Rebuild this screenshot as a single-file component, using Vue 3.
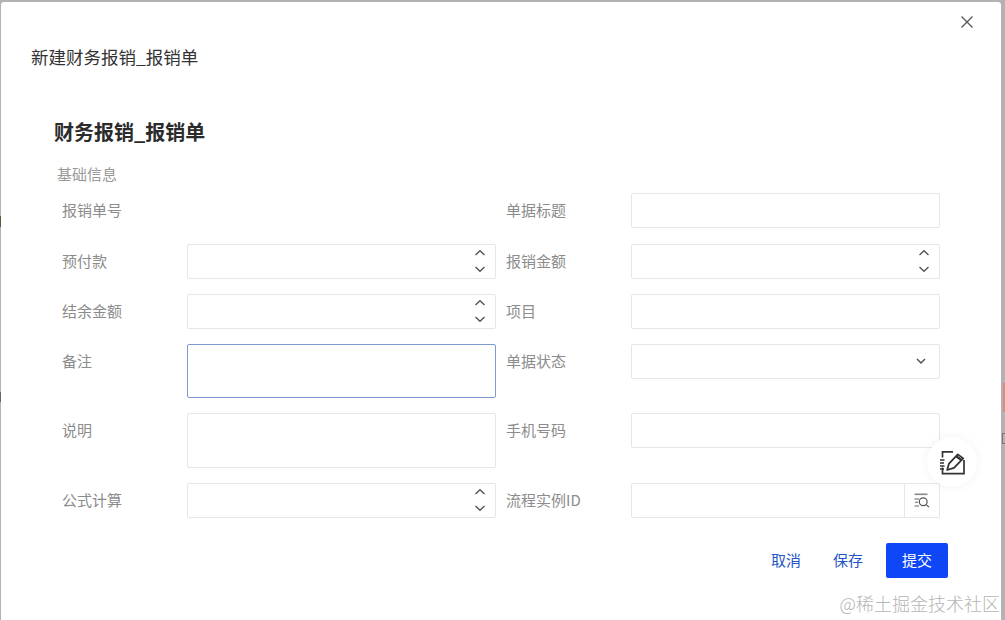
<script setup>
const rows = [
  [{ label: '报销单号', type: 'none' }, { label: '单据标题', type: 'text', short: true }],
  [{ label: '预付款', type: 'number' }, { label: '报销金额', type: 'number' }],
  [{ label: '结余金额', type: 'number' }, { label: '项目', type: 'text' }],
  [{ label: '备注', type: 'focus' }, { label: '单据状态', type: 'select', short: true }],
  [{ label: '说明', type: 'text' }, { label: '手机号码', type: 'text', short: true }],
  [{ label: '公式计算', type: 'number' }, { label: '流程实例ID', type: 'lookup' }],
]
</script>

<template>
  <div class="page">
    <span class="edge-left"></span>
    <div class="dialog">
      <svg class="close" width="14" height="14" viewBox="0 0 14 14" aria-label="关闭">
        <path d="M1.5 1.5 12.5 12.5M12.5 1.5 1.5 12.5" fill="none" stroke="#555" stroke-width="1.3" />
      </svg>
      <div class="dialog-title">新建财务报销_报销单</div>
      <div class="body">
        <h2 class="form-title">财务报销_报销单</h2>
        <div class="section">基础信息</div>
        <div class="form">
          <template v-for="(row, r) in rows" :key="r">
            <div v-for="(f, c) in row" :key="c" class="field">
              <span class="label">{{ f.label }}</span>
              <div v-if="f.type !== 'none'" class="control" :class="{ focus: f.type === 'focus', short: f.short }">
                <span v-if="f.type === 'number'" class="stepper">
                  <svg width="12" height="8" viewBox="0 0 12 8"><path d="M1.5 6 6 1.8 10.5 6" fill="none" stroke="#555" stroke-width="1.4" /></svg>
                  <svg width="12" height="8" viewBox="0 0 12 8"><path d="M1.5 2 6 6.2 10.5 2" fill="none" stroke="#555" stroke-width="1.4" /></svg>
                </span>
                <span v-if="f.type === 'select'" class="caret">
                  <svg width="12" height="8" viewBox="0 0 12 8"><path d="M2 2 6 6 10 2" fill="none" stroke="#555" stroke-width="1.5" /></svg>
                </span>
                <span v-if="f.type === 'lookup'" class="lookup">
                  <svg width="16" height="16" viewBox="0 0 16 16">
                    <path d="M0.5 1.3H13.5" fill="none" stroke="#888" stroke-width="1.6" />
                    <path d="M0.5 6H5M1 9.3H4M0.5 13H5" fill="none" stroke="#666" stroke-width="1.1" />
                    <circle cx="9.2" cy="8.8" r="3.9" fill="none" stroke="#555" stroke-width="1.2" />
                    <path d="M12 11.6 15 14" fill="none" stroke="#555" stroke-width="1.2" />
                  </svg>
                </span>
              </div>
            </div>
          </template>
        </div>
      </div>
      <div class="footer">
        <button class="link">取消</button>
        <button class="link">保存</button>
        <button class="primary">提交</button>
      </div>
      <div class="float-btn">
        <svg width="26" height="27" viewBox="0 0 26 27">
          <path d="M14 2.8H3.5V8.5M3.5 18.5V24.6H25V11" fill="none" stroke="#333" stroke-width="1.7" />
          <path d="M1 11H5.5M1 14H5M1 17H5.5M1 20H5" fill="none" stroke="#333" stroke-width="1.3" />
          <path d="M8.2 21 10 14.6 18.8 5.4 24.2 9.4 15 18.8Z" fill="#fff" stroke="#333" stroke-width="1.8" stroke-linejoin="round" />
          <path d="M17.2 7.2 22.4 11" fill="none" stroke="#333" stroke-width="2.4" />
        </svg>
      </div>
    </div>
    <span class="peek-red"></span>
    <span class="peek-text"></span>
    <span class="watermark">@稀土掘金技术社区</span>
  </div>
</template>

<style scoped>
.page {
  position: relative;
  width: 1005px;
  height: 620px;
  box-sizing: border-box;
  padding: 2px 4px 0 1px;
  overflow: hidden;
  background: #b3b3b3;
  font-family: "Noto Sans CJK SC", "Liberation Sans", sans-serif;
}
.edge-left {
  position: absolute;
  top: 100px;
  left: 0;
  width: 1px;
  height: 310px;
  background: linear-gradient(
    to bottom,
    transparent 0 116px,
    #5d5a3a 116px 127px,
    transparent 127px 292px,
    #666 292px 302px,
    transparent 302px
  );
}
.dialog {
  position: relative;
  height: 618px;
  box-sizing: border-box;
  background: #fff;
  border-radius: 3px 3px 0 0;
}
.close {
  position: absolute;
  top: 13px;
  right: 27px;
}
.dialog-title {
  padding: 43px 0 0 30px;
  font-size: 17.5px;
  line-height: 24px;
  color: #333;
}
.body {
  padding: 49px 0 0 53px;
}
.form-title {
  margin: 0;
  font-size: 20px;
  line-height: 28px;
  font-weight: 700;
  color: #2b2b2b;
}
.section {
  margin: 17px 0 0 3px;
  font-size: 15px;
  line-height: 22px;
  color: #999;
}
.form {
  margin-top: 8px;
  display: grid;
  grid-template-columns: 444px 434px;
  grid-template-rows: 36px 35px 35px 54px 55px 35px;
  row-gap: 15px;
}
.field {
  display: flex;
  align-items: stretch;
  padding-left: 8px;
}
.label {
  flex: 0 0 125px;
  font-size: 15px;
  line-height: 33px;
  color: #8c8c8c;
  white-space: nowrap;
}
.control {
  position: relative;
  flex: 0 0 309px;
  box-sizing: border-box;
  border: 1px solid #e6e6e6;
  border-radius: 2px;
  background: #fff;
}
.control.short {
  align-self: flex-start;
  height: 35px;
}
.control.focus {
  border-color: #7d9bd1;
}
.stepper {
  position: absolute;
  top: 4px;
  right: 9px;
  display: flex;
  flex-direction: column;
  gap: 8px;
}
.caret {
  position: absolute;
  top: 12px;
  right: 12px;
  display: flex;
}
.lookup {
  position: absolute;
  top: 0;
  right: 0;
  bottom: 0;
  width: 35px;
  box-sizing: border-box;
  border-left: 1px solid #e6e6e6;
  display: flex;
  align-items: center;
  justify-content: center;
}
.footer {
  position: absolute;
  top: 541px;
  right: 53px;
  display: flex;
  align-items: center;
}
.footer button {
  font-family: inherit;
  font-size: 15px;
  border: 0;
  padding: 0 0 2px;
  height: 35px;
}
.link {
  width: 62px;
  background: none;
  color: #1f55c8;
}
.primary {
  width: 62px;
  margin-left: 7px;
  border-radius: 2px;
  background: #0f46f5;
  color: #fff;
}
.float-btn {
  position: absolute;
  top: 435px;
  right: 24px;
  width: 50px;
  height: 50px;
  border-radius: 50%;
  background: #fff;
  box-shadow: 0 0 10px rgba(0, 0, 0, 0.06);
  display: flex;
  align-items: center;
  justify-content: center;
}
.peek-red {
  position: absolute;
  top: 383px;
  right: 0;
  width: 2px;
  height: 29px;
  background: #e08a7a;
}
.peek-text {
  position: absolute;
  top: 433px;
  right: 0;
  width: 3px;
  height: 11px;
  box-sizing: border-box;
  border: 1px solid #777;
  border-right: 0;
}
.watermark {
  position: absolute;
  right: 5px;
  bottom: 6px;
  font-size: 18px;
  line-height: 22px;
  color: #b5b5b5;
  font-weight: 300;
  white-space: nowrap;
}
</style>
